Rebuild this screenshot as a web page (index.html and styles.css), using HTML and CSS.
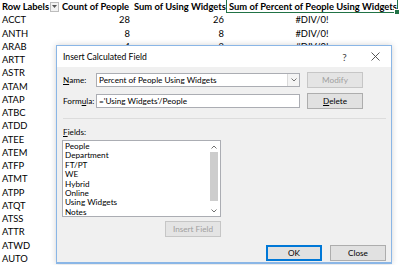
FILE: index.html
```html
<!DOCTYPE html>
<html lang="en">
<head>
    <meta charset="UTF-8">
    <title>Insert Calculated Field</title>
    <link rel="stylesheet" href="styles.css">
</head>
<body>
    <div class="sheet">
        <div class="cell head">Row Labels<span class="filter"><svg width="5" height="3" viewBox="0 0 5 3"><path d="M0 0h5L2.5 3z" fill="#555"/></svg></span></div>
        <div class="cell head">Count of People</div>
        <div class="cell head">Sum of Using Widgets</div>
        <div class="cell head selected">Sum of Percent of People Using Widgets<span class="handle"></span></div>
        <div class="cell"></div>

        <div class="cell">ACCT</div><div class="cell num">28</div><div class="cell num">26</div><div class="cell err">#DIV/0!</div><div class="cell"></div>
        <div class="cell">ANTH</div><div class="cell num">8</div><div class="cell num">8</div><div class="cell err">#DIV/0!</div><div class="cell"></div>
        <div class="cell">ARAB</div><div class="cell num">4</div><div class="cell num">2</div><div class="cell err">#DIV/0!</div><div class="cell"></div>
        <div class="cell">ARTT</div><div class="cell num">3</div><div class="cell num">3</div><div class="cell err">#DIV/0!</div><div class="cell"></div>
        <div class="cell">ASTR</div><div class="cell num">5</div><div class="cell num">4</div><div class="cell err">#DIV/0!</div><div class="cell"></div>
        <div class="cell">ATAM</div><div class="cell num">6</div><div class="cell num">5</div><div class="cell err">#DIV/0!</div><div class="cell"></div>
        <div class="cell">ATAP</div><div class="cell num">2</div><div class="cell num">2</div><div class="cell err">#DIV/0!</div><div class="cell"></div>
        <div class="cell">ATBC</div><div class="cell num">4</div><div class="cell num">3</div><div class="cell err">#DIV/0!</div><div class="cell"></div>
        <div class="cell">ATDD</div><div class="cell num">7</div><div class="cell num">6</div><div class="cell err">#DIV/0!</div><div class="cell"></div>
        <div class="cell">ATEE</div><div class="cell num">3</div><div class="cell num">1</div><div class="cell err">#DIV/0!</div><div class="cell"></div>
        <div class="cell">ATEM</div><div class="cell num">9</div><div class="cell num">8</div><div class="cell err">#DIV/0!</div><div class="cell"></div>
        <div class="cell">ATFP</div><div class="cell num">5</div><div class="cell num">5</div><div class="cell err">#DIV/0!</div><div class="cell"></div>
        <div class="cell">ATMT</div><div class="cell num">4</div><div class="cell num">2</div><div class="cell err">#DIV/0!</div><div class="cell"></div>
        <div class="cell">ATPP</div><div class="cell num">6</div><div class="cell num">6</div><div class="cell err">#DIV/0!</div><div class="cell"></div>
        <div class="cell">ATQT</div><div class="cell num">3</div><div class="cell num">2</div><div class="cell err">#DIV/0!</div><div class="cell"></div>
        <div class="cell">ATSS</div><div class="cell num">8</div><div class="cell num">7</div><div class="cell err">#DIV/0!</div><div class="cell"></div>
        <div class="cell">ATTR</div><div class="cell num">2</div><div class="cell num">1</div><div class="cell err">#DIV/0!</div><div class="cell"></div>
        <div class="cell">ATWD</div><div class="cell num">5</div><div class="cell num">4</div><div class="cell err">#DIV/0!</div><div class="cell"></div>
        <div class="cell">AUTO</div><div class="cell num">4</div><div class="cell num">4</div><div class="cell err">#DIV/0!</div><div class="cell"></div>
    </div>

    <div class="dialog">
        <div class="title-bar">
            <span class="title">Insert Calculated Field</span>
            <span class="title-btn help">?</span>
            <span class="title-btn"><svg width="9" height="9" viewBox="0 0 9 9"><path d="M0.5 0.5l8 8M8.5 0.5l-8 8" stroke="#444" stroke-width="0.9"/></svg></span>
        </div>

        <div class="dialog-body">
            <div class="field-row">
                <label class="field-label"><u>N</u>ame:</label>
                <div class="combo">
                    <span class="combo-text">Percent of People Using Widgets</span>
                    <span class="combo-arrow"><svg width="6" height="4" viewBox="0 0 6 4"><path d="M0.5 0.5l2.5 2.5l2.5-2.5" fill="none" stroke="#666" stroke-width="0.9"/></svg></span>
                </div>
                <button class="btn" disabled>Modify</button>
            </div>
            <div class="field-row">
                <label class="field-label">Form<u>u</u>la:</label>
                <div class="text-box">='Using Widgets'/People</div>
                <button class="btn"><u>D</u>elete</button>
            </div>

            <div class="separator"></div>

            <div class="fields-label"><u>F</u>ields:</div>
            <div class="list-box">
                <ul class="list-items">
                    <li>People</li>
                    <li>Department</li>
                    <li>FT/PT</li>
                    <li>WE</li>
                    <li>Hybrid</li>
                    <li>Online</li>
                    <li>Using Widgets</li>
                    <li>Notes</li>
                </ul>
                <div class="scrollbar">
                    <svg class="arrow" width="6" height="4" viewBox="0 0 6 4"><path d="M0.5 3.5l2.5-2.5l2.5 2.5" fill="none" stroke="#606060" stroke-width="0.9"/></svg>
                    <div class="thumb"></div>
                    <svg class="arrow" width="6" height="4" viewBox="0 0 6 4"><path d="M0.5 0.5l2.5 2.5l2.5-2.5" fill="none" stroke="#606060" stroke-width="0.9"/></svg>
                </div>
            </div>
            <div class="insert-row">
                <button class="btn" disabled>Insert Field</button>
            </div>

            <div class="dialog-actions">
                <button class="btn default">OK</button>
                <button class="btn">Close</button>
            </div>
        </div>
    </div>
</body>
</html>
```

FILE: styles.css
```css
body {
    margin: 0;
    background-color: #fff;
    font-family: Lato, "Liberation Sans", sans-serif;
    color: #000;
    overflow: hidden;
}

.sheet {
    display: grid;
    grid-template-columns: 60px 72px 94px 172px 1fr;
    grid-auto-rows: 13.25px;
    font-size: 9.4px;
}

.cell {
    padding: 0 2px;
    line-height: 13.25px;
    white-space: nowrap;
    overflow: hidden;
    box-sizing: border-box;
}

.cell.head {
    font-weight: bold;
    display: flex;
    align-items: center;
    padding: 0 1px 0 2px;
}

.cell.num {
    text-align: right;
}

.cell.err {
    text-align: center;
}

.filter {
    margin-left: auto;
    width: 7px;
    height: 8px;
    border: 1px solid #bdbdbd;
    background-color: #f3f3f3;
    display: flex;
    align-items: center;
    justify-content: center;
}

.selected {
    position: relative;
    overflow: visible;
    border: 1px solid #217346;
    border-top: none;
}

.handle {
    position: absolute;
    right: -3px;
    bottom: -3px;
    width: 4px;
    height: 4px;
    background-color: #217346;
    border: 1px solid #fff;
}

/* dialog */

.dialog {
    position: absolute;
    left: 56px;
    top: 45px;
    width: 336px;
    height: 219px;
    box-sizing: border-box;
    border: 1px solid #8ab6e6;
    border-bottom-width: 2px;
    background-color: #f0f0f0;
    box-shadow: 0 0 6px rgba(0, 0, 0, 0.18);
    font-family: Lato, "Noto Sans", sans-serif;
    font-size: 8.2px;
    color: #000;
}

.title-bar {
    height: 21px;
    display: flex;
    align-items: center;
    background-color: #fff;
    padding-left: 6px;
}

.title {
    flex-grow: 1;
    font-size: 8.6px;
}

.title-btn {
    width: 31px;
    display: flex;
    justify-content: center;
    align-items: center;
    color: #444;
}

.title-btn.help {
    font-size: 10px;
}

.dialog-body {
    padding: 5px 5px 0 6px;
}

.field-row {
    display: flex;
    align-items: center;
    gap: 5px;
    margin-bottom: 5px;
}

.field-label {
    width: 28px;
    white-space: nowrap;
}

.combo,
.text-box {
    width: 204px;
    height: 14px;
    box-sizing: border-box;
    border: 1px solid #abadb3;
    background-color: #fff;
    display: flex;
    align-items: center;
    padding-left: 2px;
    margin-right: 2px;
}

.combo-text {
    flex-grow: 1;
}

.combo-arrow {
    width: 11px;
    height: 12px;
    border-left: 1px solid #dadada;
    background-color: #f4f4f4;
    display: flex;
    align-items: center;
    justify-content: center;
}

.btn {
    width: 56px;
    height: 16px;
    padding: 0;
    font-family: inherit;
    font-size: 8.2px;
    color: #000;
    background-color: #e1e1e1;
    border: 1px solid #adadad;
    border-radius: 0;
}

.btn:disabled {
    color: #a0a0a0;
    background-color: #e4e4e4;
    border-color: #c6c6c6;
}

.btn.default {
    border: 1px solid #0078d7;
    box-shadow: inset 0 0 0 1px #0078d7;
}

.separator {
    height: 1px;
    background-color: #dcdcdc;
    margin: 9px 0 8px 0;
}

.fields-label {
    line-height: 11px;
    margin-bottom: 2px;
}

.list-box {
    width: 159px;
    height: 77px;
    margin-left: -1px;
    box-sizing: border-box;
    border: 1px solid #abadb3;
    background-color: #fff;
    display: flex;
}

.list-items {
    list-style: none;
    margin: 0;
    padding: 1px 0 0 2px;
    flex-grow: 1;
}

.list-items li {
    line-height: 9.4px;
}

.scrollbar {
    width: 12px;
    display: flex;
    flex-direction: column;
    align-items: center;
    padding: 4px 0 3px 0;
    gap: 2px;
}

.thumb {
    width: 8px;
    flex-grow: 1;
    margin: 1px 0 6px 0;
    background-color: #cdcdcd;
}

.insert-row {
    width: 158px;
    display: flex;
    justify-content: flex-end;
    margin-top: 4px;
}

.dialog-actions {
    display: flex;
    justify-content: flex-end;
    gap: 8px;
    margin-top: 8px;
}
```
